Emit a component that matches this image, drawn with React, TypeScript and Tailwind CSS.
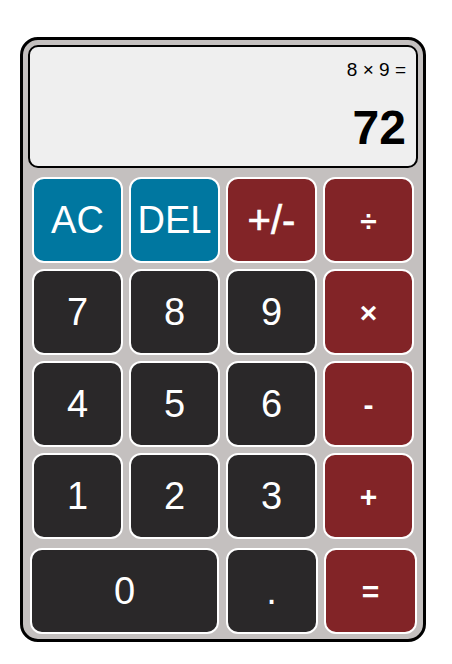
import React from 'react'

const font = { fontFamily: '"Liberation Sans", Arial, Helvetica, sans-serif' }

type Key = { label: string; kind: 'fn' | 'op' | 'num'; big?: boolean }

const rows: Key[][] = [
  [
    { label: 'AC', kind: 'fn' },
    { label: 'DEL', kind: 'fn' },
    { label: '+/-', kind: 'op', big: true },
    { label: '÷', kind: 'op' },
  ],
  [
    { label: '7', kind: 'num' },
    { label: '8', kind: 'num' },
    { label: '9', kind: 'num' },
    { label: '×', kind: 'op' },
  ],
  [
    { label: '4', kind: 'num' },
    { label: '5', kind: 'num' },
    { label: '6', kind: 'num' },
    { label: '-', kind: 'op' },
  ],
  [
    { label: '1', kind: 'num' },
    { label: '2', kind: 'num' },
    { label: '3', kind: 'num' },
    { label: '+', kind: 'op' },
  ],
]

function Btn({ k, className = '' }: { k: Key; className?: string }) {
  const color =
    k.kind === 'fn' ? 'bg-[#0077a0]' : k.kind === 'op' ? 'bg-[#822427]' : 'bg-[#2a2829]'
  const size = k.big
    ? 'text-[40px] [-webkit-text-stroke:0.6px_white]'
    : k.kind === 'op'
      ? 'text-[30px] font-bold'
      : 'text-[38px]'
  return (
    <button
      className={`flex h-[86px] items-center justify-center rounded-[12px] border-2 border-white text-white ${color} ${size} ${className}`}
      style={font}
    >
      {k.label}
    </button>
  )
}

export default function App() {
  return (
    <div className="min-h-screen bg-white pt-[37px] pl-[20px]">
      <div className="w-[406px] h-[605px] rounded-[18px] border-[3px] border-black bg-[#c4c0bf] pt-[5px]">
        {/* Display */}
        <div
          className="mx-[5px] flex h-[123px] flex-col items-end rounded-[10px] border-2 border-black bg-[#efefef] pr-[10px] pt-[13px]"
          style={font}
        >
          <div className="text-[19px] leading-none text-black">8 × 9 =</div>
          <div className="mt-auto mb-[14px] text-[48px] font-bold leading-none text-black">72</div>
        </div>

        {/* Keys */}
        <div className="mt-[9px] grid grid-cols-4 gap-[6px] px-[9px]">
          {rows.flat().map(k => (
            <Btn key={k.label} k={k} />
          ))}
        </div>
        <div className="mt-[9px] grid grid-cols-[189px_92px_93px] gap-x-[6.5px] pl-[7px]">
          <Btn k={{ label: '0', kind: 'num' }} />
          <Btn k={{ label: '.', kind: 'num' }} />
          <Btn k={{ label: '=', kind: 'op' }} />
        </div>
      </div>
    </div>
  )
}
